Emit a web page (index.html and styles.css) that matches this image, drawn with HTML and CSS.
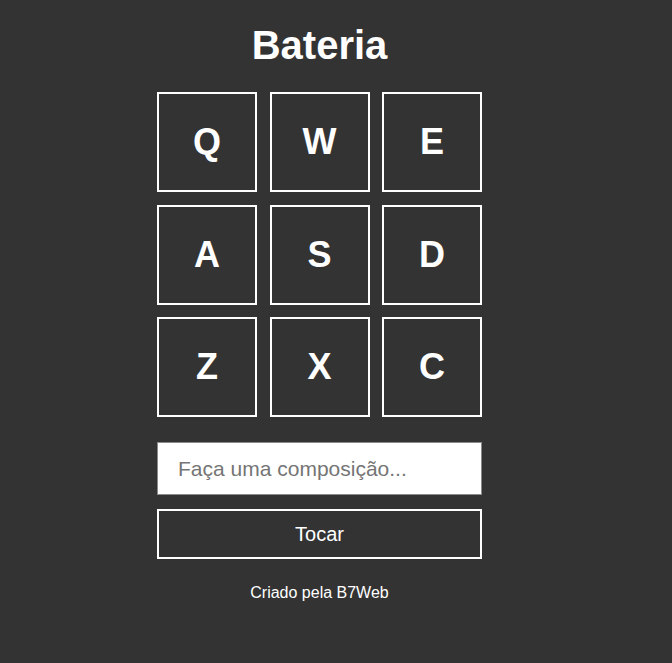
FILE: index.html
```html
<!DOCTYPE html>
<html lang="pt-BR">
<head>
<meta charset="utf-8">
<title>Bateria</title>
<link rel="stylesheet" href="styles.css">
</head>
<body>
<div class="page">
  <h1 class="title">Bateria</h1>
  <div class="keys">
    <div class="key">Q</div>
    <div class="key">W</div>
    <div class="key">E</div>
    <div class="key">A</div>
    <div class="key">S</div>
    <div class="key">D</div>
    <div class="key">Z</div>
    <div class="key">X</div>
    <div class="key">C</div>
  </div>
  <input class="composer" type="text" placeholder="Faça uma composição...">
  <button class="play">Tocar</button>
  <footer class="footer">Criado pela B7Web</footer>
</div>
</body>
</html>
```

FILE: styles.css
```css
html, body {
  margin: 0;
  padding: 0;
  background: #333333;
  height: 100%;
}
body {
  font-family: "Liberation Sans", Arial, sans-serif;
  color: #ffffff;
}
.page {
  width: 639px;
  display: flex;
  flex-direction: column;
  align-items: center;
  padding-top: 22px;
}
.title {
  margin: 0;
  font-size: 40px;
  font-weight: bold;
  line-height: 46px;
}
.keys {
  margin-top: 24px;
  display: grid;
  grid-template-columns: repeat(3, 100px);
  grid-auto-rows: 100px;
  gap: 12.5px;
  width: 325px;
}
.key {
  box-sizing: border-box;
  border: 2px solid #ffffff;
  display: flex;
  align-items: center;
  justify-content: center;
  font-size: 36px;
  font-weight: bold;
}
.composer {
  margin-top: 25px;
  box-sizing: border-box;
  width: 325px;
  height: 53px;
  border: 1px solid #8a8a8a;
  padding: 0 20px;
  font-family: "Liberation Sans", Arial, sans-serif;
  font-size: 21px;
  color: #333;
  background: #ffffff;
  outline: none;
}
.composer::placeholder {
  color: #757575;
}
.play {
  margin-top: 14px;
  box-sizing: border-box;
  width: 325px;
  height: 50px;
  border: 2px solid #ffffff;
  background: transparent;
  color: #ffffff;
  font-family: "Liberation Sans", Arial, sans-serif;
  font-size: 20px;
  cursor: pointer;
}
.footer {
  margin-top: 25px;
  font-size: 16px;
  line-height: 18px;
}
```
